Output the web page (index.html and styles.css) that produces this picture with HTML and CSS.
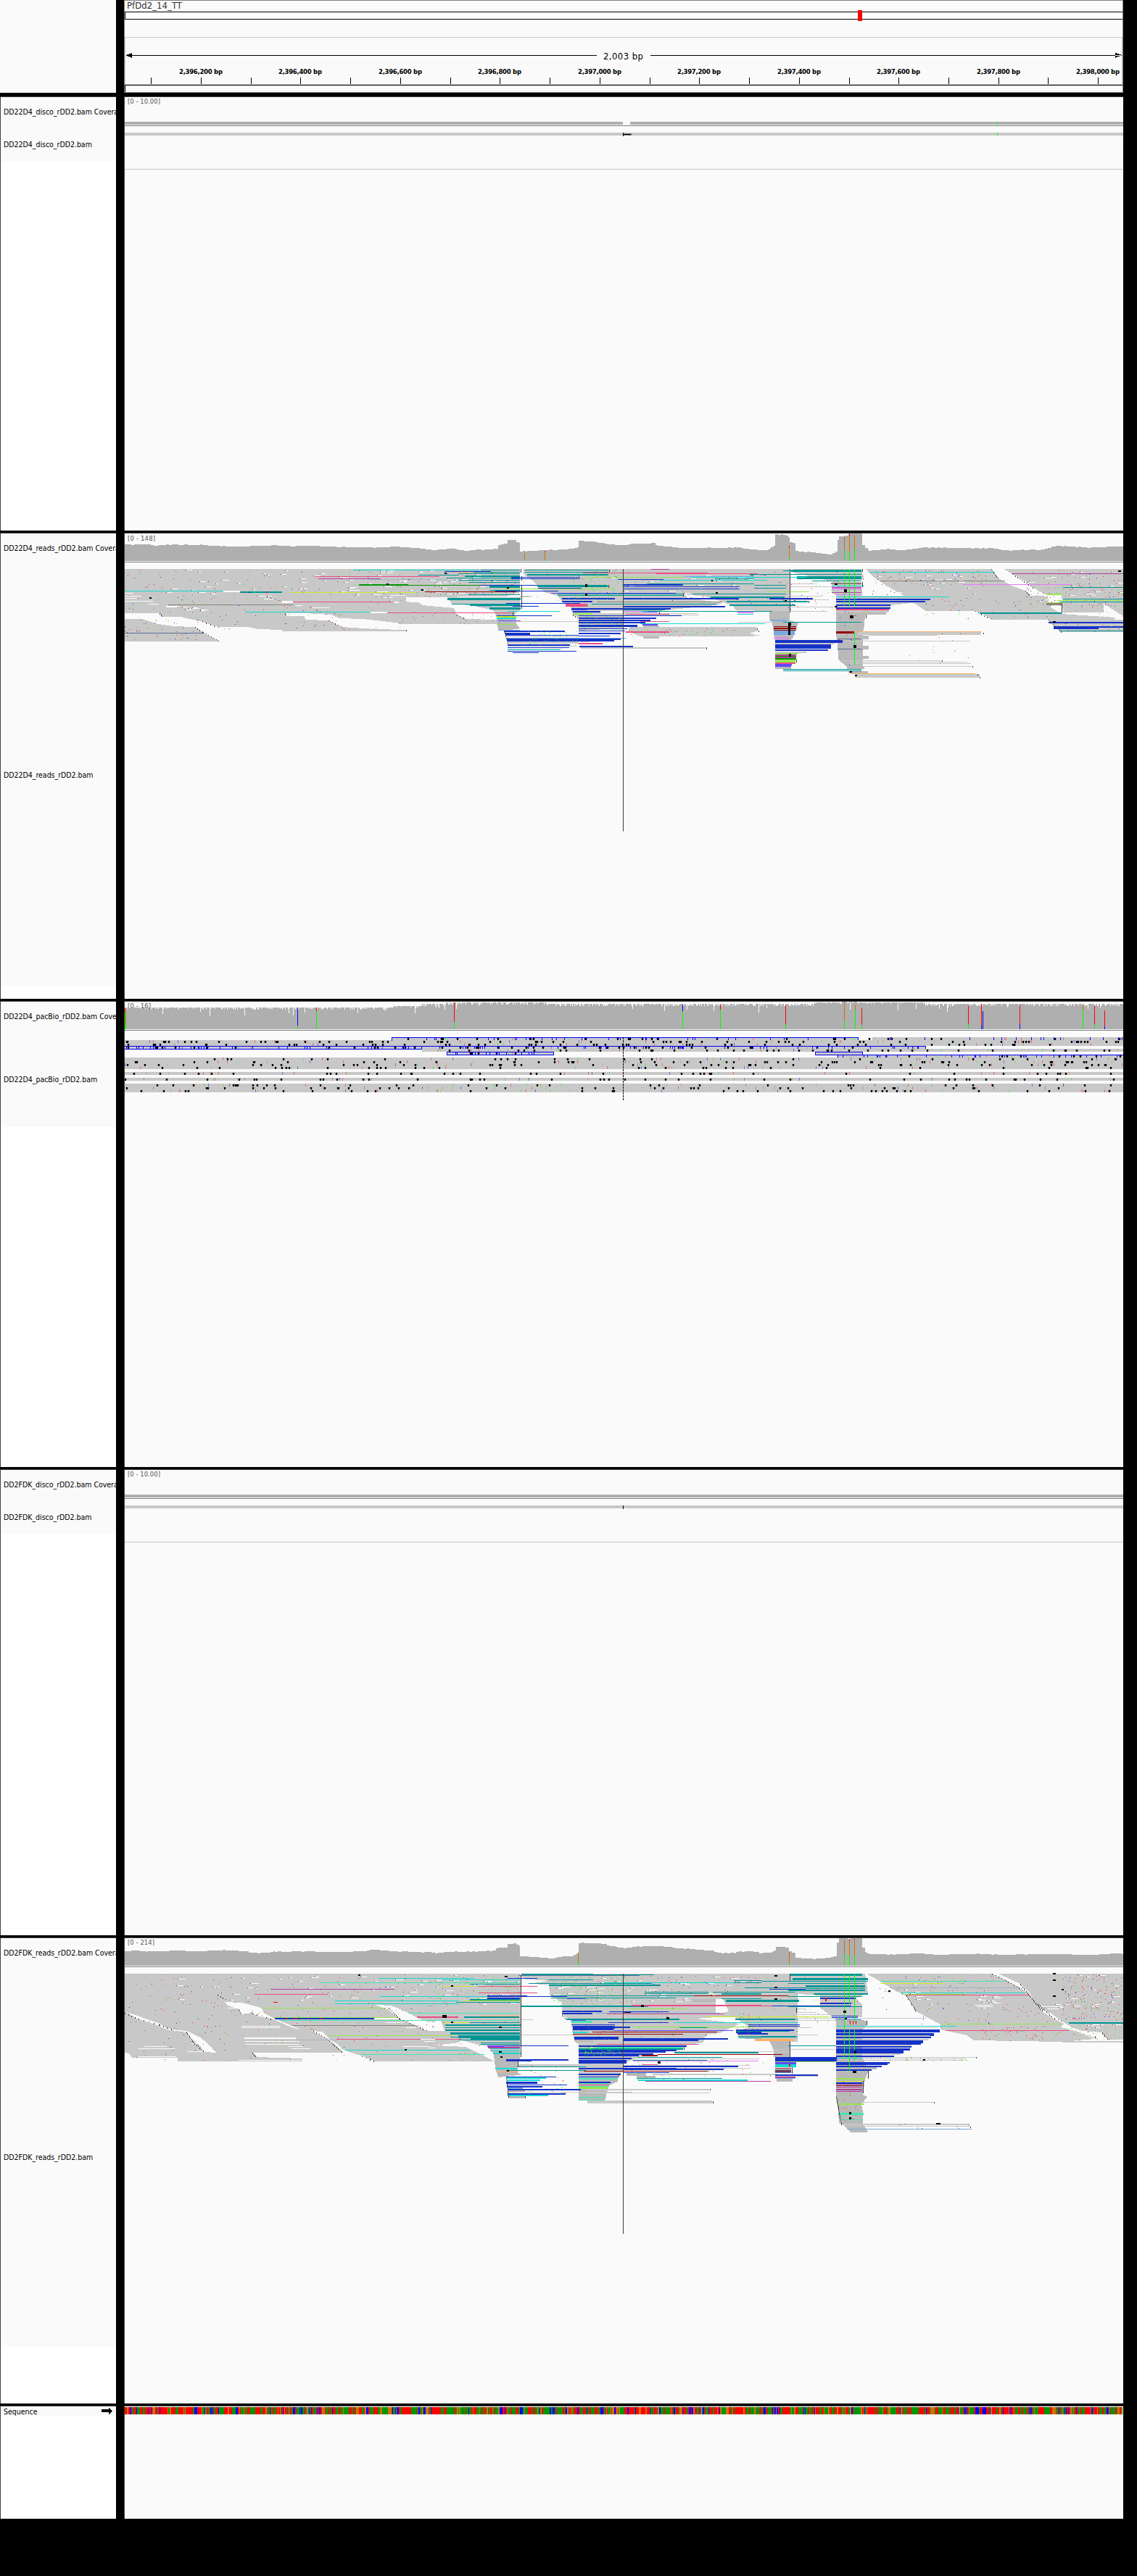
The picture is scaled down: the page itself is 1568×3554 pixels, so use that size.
FILE: index.html
```html
<!DOCTYPE html>
<html lang="en">
<head>
<meta charset="utf-8">
<title>PfDd2_14_TT</title>
<link rel="stylesheet" href="styles.css">
</head>
<body>
<main class="browser">
  <section class="row header">
    <div class="names plain"></div>
    <div class="data ruler">
      <svg width="1377" height="128" viewBox="172 0 1377 128" shape-rendering="crispEdges">
        <path fill="#808080" d="M172 0h1377v1h-1377zM1548 0h1v128h-1zM172 127h1377v1h-1377z"/>
        <path fill="#fff" d="M172 17h1376v9h-1376z"/>
        <path d="M172 16h1376v1h-1376zM172 26h1376v1h-1376zM172 16h1v11h-1zM172 117h1376v1h-1376zM172 117h1v10h-1z"/>
        <path fill="#f00" d="M1183 14h6v15h-6z"/>
        <path fill="#c8c8d0" d="M172 51h1376v1h-1376zM172 51h1v66h-1zM1547 51h1v66h-1zM172 116h1376v1h-1376z"/>
        <path d="M174 76h649v1h-649zM897 76h650v1h-650zM173 76l9-3v7zM1547 76l-9-3v7z"/>
        <g id="ticks"></g>
        <text class="chrom" x="175" y="12" textLength="76">PfDd2_14_TT</text>
        <text class="span" x="832" y="82" textLength="55">2,003 bp</text>
      </svg>
    </div>
  </section>
  <section class="row disco">
    <div class="names"><div class="track cover">DD22D4_disco_rDD2.bam Coverage</div><div class="track reads">DD22D4_disco_rDD2.bam</div></div>
    <div class="data"><svg id="p1" class="plot" height="598" viewBox="172 134 1377 598"></svg></div>
  </section>
  <section class="row tall">
    <div class="names"><div class="track cover">DD22D4_reads_rDD2.bam Coverage</div><div class="track reads long">DD22D4_reads_rDD2.bam</div></div>
    <div class="data"><svg id="p2" class="plot" height="642" viewBox="172 736 1377 642"></svg></div>
  </section>
  <section class="row tall">
    <div class="names"><div class="track cover">DD22D4_pacBio_rDD2.bam Coverage</div><div class="track reads mid">DD22D4_pacBio_rDD2.bam</div></div>
    <div class="data"><svg id="p3" class="plot" height="642" viewBox="172 1382 1377 642"></svg></div>
  </section>
  <section class="row tall">
    <div class="names"><div class="track cover">DD2FDK_disco_rDD2.bam Coverage</div><div class="track reads">DD2FDK_disco_rDD2.bam</div></div>
    <div class="data"><svg id="p4" class="plot" height="642" viewBox="172 2028 1377 642"></svg></div>
  </section>
  <section class="row tall">
    <div class="names"><div class="track cover">DD2FDK_reads_rDD2.bam Coverage</div><div class="track reads longer">DD2FDK_reads_rDD2.bam</div></div>
    <div class="data"><svg id="p5" class="plot" height="642" viewBox="172 2674 1377 642"></svg></div>
  </section>
  <section class="row seq">
    <div class="names"><div class="track sequence"><span>Sequence</span>
      <svg width="15" height="9" viewBox="0 0 15 9" shape-rendering="crispEdges"><path d="M0 2h10v-2h1v1h1v1h1v1h1v1h1v1h-1v1h-1v1h-1v1h-1v1h-1v-3h-10z"/></svg></div></div>
    <div class="data"><svg id="p6" class="plot" height="155" viewBox="172 3320 1377 155"></svg></div>
  </section>
</main>
<script src="tracks.js"></script>
</body>
</html>
```
FILE: styles.css
```css
body { margin: 0; background: #000; }
.browser { width: 1549px; font-family: "DejaVu Sans Condensed", "DejaVu Sans", sans-serif; font-stretch: condensed; color: #000; }
.row { display: flex; gap: 11px; box-sizing: border-box; }
.header { height: 128px; margin-bottom: 5px; }
.disco { height: 599px; }
.tall { height: 643px; margin-top: 3px; }
.seq { height: 156px; margin-top: 3px; }
.names { width: 160px; box-sizing: border-box; flex: none; overflow: hidden; background: #fff; border-left: 1px solid #404040; border-top: 1px solid #404040; }
.names.plain { background: #fafafa; border: 0; }
.data { width: 1378px; box-sizing: border-box; flex: none; overflow: hidden; background: #fafafa; border-left: 1px solid #404040; border-top: 1px solid #404040; }
.ruler { border-top: 0; border-left-color: #808080; }
.data svg { display: block; }
.plot { width: 1377px; }
.track { display: flex; align-items: center; box-sizing: border-box; padding-left: 4px; background: #fafafa; font-size: 10.5px; line-height: 14px; letter-spacing: -0.02px; white-space: nowrap; }
.cover { height: 40px; }
.reads { height: 49px; }
.long { height: 585px; }
.mid { height: 133px; }
.longer { height: 524px; }
.sequence { height: 13px; justify-content: space-between; padding-right: 5px; }
.sequence svg { margin-top: -1px; }
text { font-family: "DejaVu Sans Condensed", "DejaVu Sans", sans-serif; font-stretch: condensed; }
.chrom { font-size: 13px; fill: #333; }
.span { font-size: 13px; }
.tick { font-size: 9.5px; font-weight: bold; text-anchor: middle; }
.range { font-size: 9.4px; fill: #555; }
```
FILE: tracks.js
```js
const INK = { G:'#c8c8c8', g:'#b9b9b9', D:'#afafaf', T:'#009696', B:'#1432c8', C:'#14dcd2', P:'#ee4c83', M:'#b43ca0', L:'#96e650', Y:'#c8f028', R:'#960000', O:'#ffaf5f', S:'#5a6e96', K:'#3c3c3c', V:'#6446ff', A:'#78aae1', W:'#fafafa', N:'#8a8278', X:'#e678fa', E:'#46e6b4', F:'#009600', Z:'#000', r:'#ff0000', n:'#00ff00', b:'#0000ff', o:'#d17105', m:'#808080', i:'#a0b4c8' };
let seed = 7;
const rnd = () => (seed = (seed * 16807) % 2147483647) / 2147483647;
const add = (id, s) => document.getElementById(id).insertAdjacentHTML('beforeend', s);
const box = (id, c, x, y, w, h, a) => add(id, `<path fill="${INK[c]}" shape-rendering="crispEdges"${a ? ` opacity="${a}"` : ''} d="M${x} ${y}h${w}v${h}h${-w}z"/>`);

// Each tile has its own origin and horizontal density; three units per pixel vertically.
function tile(id, x0, y0, k) {
  const X = v => Math.round(x0 + v / k), Y = v => y0 + Math.round(v / 3);
  return {
    poly(c, pts) {
      add(id, `<polygon fill="${INK[c]}" shape-rendering="crispEdges" points="${pts.split(' ').map(p => p.split(',')).map(p => X(+p[0]) + ',' + Y(+p[1])).join(' ')}"/>`);
    },
    bars(s) {
      s.trim().split(/\s*;\s*/).filter(Boolean).forEach(e => {
        const [c, a, b, y, h] = e.split(' ');
        box(id, c, X(+a), Y(+y), Math.max(1, X(+b) - X(+a)), Math.max(1, Math.round((h || 3) / 3)));
      });
    },
    specks(n, a, b, y1, y2, colors, op) {
      const d = {};
      for (let i = 0; i < n; i++) {
        const c = colors[Math.floor(rnd() * colors.length)];
        d[c] = (d[c] || '') + `M${X(a + rnd() * (b - a))} ${Y(y1 + rnd() * (y2 - y1))}h1v1h-1z`;
      }
      for (const c in d) add(id, `<path fill="${INK[c]}" opacity="${op || .8}" shape-rendering="crispEdges" d="${d[c]}"/>`);
    },
    gaps(n, a, b, y1, y2) {
      let d = '', e = '';
      for (let i = 0; i < n; i++) {
        const x = X(a + rnd() * (b - a)), y = Y(y1 + rnd() * (y2 - y1)), w = 3 + Math.floor(rnd() * 9);
        d += `M${x} ${y}h${w}v1h${-w}z`; e += `M${x - 1} ${y}h1v1h-1z`;
      }
      add(id, `<path fill="#fafafa" shape-rendering="crispEdges" d="${d}"/><path fill="#3c3c3c" shape-rendering="crispEdges" d="${e}"/>`);
    },
    edge(pts) {
      const p = pts.split(' ').map(q => q.split(',').map(Number));
      let d = '';
      for (let i = 1; i < p.length; i++) {
        const [ax, ay] = p[i - 1], [bx, by] = p[i];
        for (let y = ay; y < by; y += 6) d += `M${X(ax + (bx - ax) * (y - ay) / (by - ay))} ${Y(y)}h1v${rnd() < .6 ? 2 : 1}h-1z`;
      }
      add(id, `<path fill="#3c3c3c" shape-rendering="crispEdges" d="${d}"/>`);
    },
    cover(base, pts) {
      const p = pts.split(' ').map(q => q.split(',').map(Number));
      let d = `M${X(p[0][0])} ${Y(base)}`;
      for (let i = 0; i < p.length; i++) {
        const [ax, ay] = p[i];
        d += `L${X(ax)} ${Y(ay)}`;
        if (p[i + 1]) {
          const [bx, by] = p[i + 1];
          for (let x = ax + 12; x < bx; x += 12) {
            const y = Y(ay + (by - ay) * (x - ax) / (bx - ax) + (rnd() - .5) * 3);
            d += `H${X(x)}V${y}`;
          }
          d += `H${X(bx)}`;
        }
      }
      add(id, `<path fill="${INK.D}" shape-rendering="crispEdges" d="${d}V${Y(base)}z"/>`);
    }
  };
}
const range = (id, y, t, w) => add(id, `<text class="range" x="176" y="${y}" textLength="${w}">${t}</text>`);

for (let i = 0; i < 20; i++) {
  const x = Math.round(208.3 + 68.73 * i);
  box('ticks', 'Z', x, 107, 1, 9);
  if (i % 2) add('ticks', `<text class="tick" x="${x}" y="102" textLength="60">${(2396100 + i * 100).toLocaleString('en-US')} bp</text>`);
}

[['p1', 134], ['p4', 2028]].forEach(([id, y]) => {
  box(id, 'D', 172, y + 34, 1377, 4); box(id, 'm', 172, y + 39, 1377, 1);
  box(id, 'G', 172, y + 49, 1377, 4); box(id, 'G', 172, y + 99, 1377, 1);
  range(id, y + 9, '[0 - 10.00]', 45);
});
box('p1', 'W', 859, 168, 10, 4); box('p1', 'm', 859, 184, 12, 3); box('p1', 'Z', 859, 185, 11, 1); box('p1', 'Z', 859, 183, 1, 5);
box('p1', 'n', 1375, 168, 1, 4); box('p1', 'n', 1375, 183, 1, 4); box('p4', 'Z', 859, 2077, 1, 5);

// DD22D4 short reads
let t = tile('p2', 0, 720, 2.8);
t.cover(162, '482,94 545,92 600,98 640,94 780,95 860,100 930,103 1000,98 1085,98 1130,101 1200,98 1250,103 1370,105 1470,106 1510,102 1568,106');
t.poly('G', '482,195 1568,195 1568,452 1090,452 1088,447 1000,445 955,436 845,434 765,408 718,400 700,393 628,393 616,378 482,378');
t.poly('G', '482,402 550,402 610,424 670,431 752,436 784,458 824,480 850,494 482,494');
t.poly('W', '1100,378 1175,378 1280,384 1310,400 1400,402 1500,414 1568,422 1568,447 1450,443 1320,434 1270,408 1180,405 1175,390 1106,390');
t.gaps(45, 640, 1568, 198, 300); t.gaps(14, 1330, 1550, 250, 330); t.gaps(8, 640, 800, 340, 365);
t.specks(150, 482, 1568, 198, 390, 'rnbonrn'); t.specks(50, 482, 780, 405, 492, 'rnbor'); t.specks(30, 850, 1568, 395, 445, 'rnbo');
t.bars('W 482 515 294;W 482 545 306;W 482 530 315;W 482 590 327;W 570 612 339;W 640 690 348 6;W 1140 1168 345;W 1205 1270 355;W 1090 1130 327 9;W 1000 1050 306;W 1020 1055 318;W 1505 1568 303;W 1520 1568 330 6;C 482 862 285;W 862 926 285 6;T 927 1090 288 6;Y 1122 1568 291;C 1364 1568 198;P 1215 1568 225;M 1229 1470 234;i 1420 1568 237;F 1385 1568 258 6;Z 1492 1500 256 6;P 1130 1520 330;N 650 1130 342;C 945 1430 372;W 1430 1495 373 5;P 1495 1568 375;S 482 784 459;Z 578 586 311 6;r 943 946 288 6;b 961 964 288 6;n 983 986 288 6;r 1028 1034 288 6');
t.edge('616,378 628,393'); t.edge('765,405 845,436'); t.edge('752,436 784,456 824,480 850,497'); t.edge('1100,378 1106,390'); t.edge('1270,408 1320,434'); t.edge('1030,306 1090,330');

t = tile('p2', 550, 720, 3);
t.cover(162, '0,106 75,108 150,117 225,110 270,120 330,115 405,112 410,97 445,90 450,74 475,76 500,87 501,124 530,121 600,116 690,114 715,110 744,103 744,78 800,82 870,92 925,97 960,91 1050,88 1070,98 1170,109 1400,106 1490,118 1530,118 1540,106 1557,95 1560,52');
t.poly('G', '0,195 501,195 501,290 440,308 35,312 0,290');
t.poly('G', '0,330 80,333 100,345 228,358 240,384 280,402 400,405 470,414 470,422 0,422');
t.poly('G', '200,312 501,312 501,365 470,388 400,388 400,375 385,362 290,345 220,338');
t.poly('g', '398,375 480,375 486,425 500,440 440,449 412,448 405,400');
t.poly('G', '516,195 1560,195 1560,365 1395,365 1380,345 1270,308 1180,300 1195,315 1340,335 1310,345 1100,365 940,385 928,398 928,440 744,450 744,395 720,385 712,350 680,335 658,305 600,290 575,265 550,240 516,215');
t.poly('G', '960,436 1480,436 1485,450 1450,462 1500,470 1430,474 1000,474 970,462 945,448');
t.gaps(30, 0, 400, 198, 300); t.gaps(20, 870, 1500, 220, 300); t.gaps(10, 1400, 1550, 198, 240);
t.bars(`C 0 330 198;T 340 501 198;B 190 380 204;O 222 320 207;T 310 501 207;T 245 501 213;T 80 250 219;T 272 501 222 6;P 0 168 225;
T 200 501 231;i 0 200 237;T 245 501 240;T 288 501 249;F 0 40 258 6;F 40 440 261;B 340 750 261;T 375 501 264 9;L 432 750 276;T 375 501 282;B 400 576 285;R 108 486 288;Y 0 70 291;T 288 501 300;W 30 200 312 18;
T 201 504 315 9;W 130 215 333 6;B 445 750 336;T 219 501 339;T 294 504 342 6;A 325 380 348;B 472 579 348;T 375 504 354 9;G 501 551 306;G 501 540 309;G 0 228 362;C 450 666 369;P 0 468 375;
B 405 633 387;Y 405 486 390 6;C 405 486 396 6;V 410 504 408;G 470 750 411;L 405 490 422;A 412 501 447;G 0 30 448 5;
T 522 867 198;T 522 867 207;T 531 867 216 6;B 465 750 228;B 465 750 234;P 762 1278 210;P 1065 1485 213;M 1045 1120 195;T 1452 1560 216 6;L 771 1177 228;A 1175 1560 225;C 1210 1560 228;T 1308 1560 234;B 905 1095 237;C 1080 1500 240;T 1025 1542 255;
T 573 864 261 9;B 928 1175 258 6;B 928 1410 267;B 576 756 273;B 928 1410 276;L 750 895 276;B 576 660 285;V 630 1146 294;T 657 1177 297;T 657 1177 303;T 1215 1560 297;T 1290 1560 309 6;B 675 895 315 6;B 928 1407 315 6;B 1533 1560 315 6;
B 675 800 327 6;N 818 1337 330;T 1356 1560 327 6;P 690 774 339 12;T 798 1315 339;T 1368 1560 342 6;B 928 1350 348 6;B 714 1125 357 6;T 928 1100 363;V 714 780 363;W 835 928 369 9;B 720 834 369 6;C 928 1200 369;X 928 1005 370;T 1029 1545 369;V 1008 1070 372;L 720 800 378 6;P 940 1119 381;G 940 1235 378;X 1401 1467 372 6;C 1401 1467 381;G 940 1242 384;
B 744 1170 387;B 744 1065 396 6;B 744 1040 405 6;P 1000 1119 411;B 744 1020 413 7;C 1000 1515 420;V 1008 1070 423 6;B 744 987 426 9;g 1011 1077 429 6;B 744 945 441 4;B 744 936 450;P 939 1119 453 6;B 744 918 459 6;B 744 873 471;G 1010 1435 471;g 1011 1077 474 8;
B 435 687 450 6;B 441 543 459 12;B 543 744 468;G 447 744 474;A 447 942 480;B 447 918 483 6;B 447 891 489 6;G 450 744 496 9;B 450 708 507 6;G 450 735 514;B 450 705 519;G 450 675 524;C 450 666 528;B 450 735 534;B 472 579 540;G 750 790 495;P 744 843 501 6;B 747 969 513 6;G 753 1269 519 6;G 1401 1542 414;A 1536 1560 405 6;g 1533 1560 370 35;R 1551 1560 432 6;R 1551 1560 441 6;A 1551 1560 450 20`);
t.specks(100, 516, 1560, 198, 340, 'nnnrnb'); t.specks(90, 0, 500, 200, 310, 'nnrrb'); t.specks(70, 720, 928, 198, 330, 'n'); t.specks(35, 744, 928, 380, 450, 'n'); t.specks(50, 500, 740, 450, 510, 'n'); t.specks(50, 0, 450, 370, 420, 'rnb', .5); t.specks(50, 960, 1400, 440, 472, 'nnr');
t.bars('K 504 508 195 15;K 506 509 225 18;K 506 509 260 100;K 471 474 372 15;K 870 873 198 10;K 868 871 260 12;K 777 780 340 12;K 1177 1180 297 12;K 1076 1079 372 9;K 1483 1486 440 6;K 1488 1491 450 6;K 1272 1275 519 9;K 30 33 447 6;o 519 522 128 26;n 519 522 155 7;r 603 606 120;o 603 606 123 34;n 603 606 156 6;Z 190 197 211 5;Z 92 102 280 5;Z 772 779 257 13;Z 772 779 296 9;Z 448 455 271 5;Z 1294 1300 241 6;Z 1312 1319 290 5');
t.edge('240,384 280,402'); t.edge('435,450 450,500'); t.edge('720,385 744,400');

t = tile('p2', 1040, 720, 2.9697);
t.cover(162, '0,115 45,120 65,108 85,98 87,52 120,53 140,62 145,85 165,90 168,120 240,127 315,136 320,128 338,124 341,75 346,60 380,57 385,48 441,48 443,95 470,121 530,113 600,117 690,106 820,107 920,110 990,110 1020,118 1180,115 1205,107 1235,98 1280,101 1370,107 1450,102 1512,101');
t.poly('G', '0,195 147,195 147,370 0,372');
t.poly('g', '62,370 147,370 147,408 180,418 168,450 160,478 150,490 85,490 75,420');
t.poly('G', '160,195 440,195 450,240 330,250 230,225 160,210');
t.poly('G', '318,250 440,250 442,305 800,305 725,318 700,330 640,335 560,345 550,375 336,380 336,303 318,295');
t.poly('g', '336,375 540,375 540,385 455,385 450,430 445,455 445,600 380,600 345,570 342,495 336,470');
t.poly('G', '455,195 970,195 1000,235 1055,265 1110,285 1125,300 1200,310 1215,355 1260,380 1480,395 1475,404 975,404 940,385 905,370 705,368 660,340 615,305 545,268 485,225');
t.poly('G', '1022,195 1512,195 1512,390 1430,340 1430,375 1265,375 1260,300 1190,300 1150,275 1110,245 1060,215');
t.poly('G', '1205,406 1512,406 1512,457 1260,457 1230,435 1210,415');
t.gaps(20, 480, 950, 215, 300); t.gaps(22, 1110, 1500, 200, 330);
t.bars(`T 150 440 198 9;T 118 150 201;T 0 440 216;P 0 15 213;T 175 440 225 12;C 0 210 228;C 0 52 240;T 238 440 243;T 0 70 255;T 0 130 261;G 0 248 256;N 315 440 252 6;C 318 450 264;T 0 130 273;G 147 330 267;L 50 226 288;T 0 130 297;G 130 278 306;T 0 125 309 6;G 147 305 321;B 62 241 315 6;T 0 220 327 6;T 0 168 342 6;G 0 320 351;T 0 75 369;G 147 300 369;
M 318 440 270;X 318 441 273 6;M 318 441 291;X 336 441 300;C 336 798 309;B 336 722 318 6;B 336 702 327 6;B 336 558 342 6;B 336 558 354 6;P 336 552 360 6;L 445 465 369;B 336 341 348;
A 65 135 405 6;T 118 440 414;C 0 45 420;R 80 172 432;R 80 172 438 6;R 80 172 447;A 80 166 450 18;X 80 143 477;X 80 143 483;B 86 362 489 12;B 86 315 507 18;B 86 303 528 6;G 86 330 501 6;G 86 213 538 5;L 86 178 543 6;M 86 172 549 18;F 86 172 555;F 86 172 563 5;L 86 169 570 12;P 86 169 582 6;V 86 153 588 6;V 86 150 594 6;g 86 150 600 9;T 118 441 609;T 118 441 615;
R 336 410 453 9;O 420 930 453;G 425 930 456 12;G 470 750 468;S 340 437 483;G 370 885 492;S 342 457 525;g 440 469 471 15;g 440 469 513 15;g 440 469 555 12;G 360 766 573;G 390 872 579;G 390 888 585;G 440 890 597;g 380 450 600 9;g 385 465 618 9;O 395 905 627;G 412 920 630 15;N 517 1028 243;C 472 985 207;X 855 1300 258;M 1055 1512 213;T 1265 1512 270;L 1197 1265 297 6;L 1197 1265 333;N 1197 1262 336 9;T 1265 1512 318;L 1241 1512 324;T 1250 1512 330;T 924 1259 375 6;B 1206 1512 414 6;B 1227 1411 432 12;B 1411 1512 432 6;T 1250 1512 450`);
t.specks(90, 480, 970, 200, 265, 'rnbor'); t.specks(60, 700, 1230, 310, 400, 'rnbon'); t.specks(110, 1110, 1510, 198, 360, 'rnbrn'); t.specks(60, 1270, 1510, 240, 400, 'r', .45); t.specks(60, 0, 440, 200, 370, 'rrnb'); t.specks(30, 345, 440, 375, 600, 'rnbn'); t.specks(14, 1230, 1500, 415, 455, 'rnb'); t.specks(14, 500, 900, 455, 600, 'rno');
t.bars('K 146 149 195 180;K 442 445 195 12;K 442 445 250 20;K 1260 1263 340 40;K 222 225 327 9;K 172 175 570 12;K 458 461 385 15;K 938 941 458 6;K 770 773 573 6;K 894 897 597 6;r 143 146 98 6;o 143 146 104 45;n 143 146 148 14;r 368 371 62;o 368 371 65 52;n 368 371 116 46;r 389 392 50 8;o 389 392 58 65;n 389 392 125 37;r 410 413 57;o 410 413 60 51;n 410 413 111 51;n 368 370 198 150;n 389 391 198 150;n 410 412 198 150;n 410 412 460 135;Z 331 341 256 7;Z 369 379 278 12;Z 329 340 349 6;Z 393 406 386 12;Z 141 150 416 11;Z 140 149 430 38;Z 408 418 511 13;Z 144 150 546 12;Z 393 401 619 7;Z 412 422 634 5;Z 1492 1502 202 5;Z 1225 1235 412 6;Z 126 133 325 7');
t.edge('970,195 1000,235'); t.edge('1110,285 1125,300'); t.edge('905,370 975,404'); t.edge('1060,215 1150,275'); t.edge('915,630 927,645'); t.edge('1205,406 1260,457');
range('p2', 746, '[0 - 148]', 38);
box('p2', 'm', 172, 775, 1377, 1); box('p2', 'K', 859, 785, 1, 362);

// DD22D4 PacBio reads
t = tile('p3', 0, 1360, 1.96);
t.bars('D 337 1060 90 90;D 1060 1140 84 96;D 1140 1205 75 105;D 1205 1480 69 111;D 1480 1568 75 105');
let u = tile('p3', 800, 1360, 2.0417);
u.bars('D 0 660 75 105;D 660 730 69 111;D 730 780 66 114;D 780 970 69 111;D 970 1529 75 105');
for (let x = 172; x < 1549; x += 1) if (rnd() < .4) {
  const top = x < 541 ? 1390 : x < 582 ? 1388 : x < 614 ? 1385 : x < 755 ? 1383 : x < 1123 ? 1385 : x < 1275 ? 1382 : 1385;
  box('p3', 'W', x, top, 1, rnd() < .06 ? 5 + Math.floor(rnd() * 8) : 1 + Math.floor(rnd() * 3));
}
t.bars('r 337 340 93 15;n 337 342 108 72;o 339 342 108 55;b 804 806 90 75;n 804 806 165 15;r 855 857 90 15;n 855 857 105 75;r 1227 1229 69 81;n 1227 1229 150 30;G 1060 1568 213 12;G 337 1568 225 36;G 1140 1568 261 12;G 1208 1495 273 12;G 337 1568 297 48;G 337 1568 357 12;G 337 1568 381 12;G 337 1568 405 36;b 1059 1568 213;b 1059 1061 213 15;b 337 1568 249;b 337 1140 261;b 1138 1140 249 15;b 1207 1496 273;b 1207 1496 285;b 1207 1209 273 15;b 1495 1497 273 15');
u.bars('b 288 290 78 27;n 288 290 105 75;r 394 396 78 21;n 394 396 99 81;r 578 580 78 80;n 578 580 158 22;o 743 745 69 75;n 743 745 144 36;o 774 776 78 21;n 774 776 99 81;r 792 794 93 68;n 792 794 165 15;r 1092 1094 84 75;n 1092 1094 159 21;r 1129 1131 75 90;b 1129 1131 165 15;b 1133 1135 105 75;r 1237 1239 78 81;b 1237 1239 159 21;o 1415 1417 78 21;n 1415 1417 99 81;r 1448 1450 84 75;n 1448 1450 159 21;r 1476 1478 102 66;b 1476 1478 168 12;G 0 782 213 12;G 822 1529 213 12;G 0 1529 225 24;G 0 972 249 12;G 0 1529 261 12;G 662 796 273 12;G 722 1529 285 12;G 0 1529 297 48;G 0 1529 357 12;G 0 1529 381 12;G 0 1529 405 36;b 0 782 213;b 781 783 213 12;b 0 972 249;b 971 973 249 12;b 661 796 273;b 661 796 285;b 661 663 273 15;b 795 797 273 15;b 722 1529 285');
[[213, 541, 1549, 30, 45], [225, 172, 1549, 75, 0], [237, 172, 1549, 60, 0], [249, 172, 1275, 45, 75], [261, 582, 1549, 40, 0], [273, 617, 762, 5, 12], [285, 1154, 1549, 9, 30], [297, 172, 1549, 27, 0], [309, 172, 1549, 50, 0], [321, 172, 1549, 50, 0], [333, 172, 1549, 32, 0], [357, 172, 1549, 40, 0], [381, 172, 1549, 42, 0], [405, 172, 1549, 33, 0], [417, 172, 1549, 38, 0], [429, 172, 1549, 34, 0]].forEach(([z, a, b, n, bl]) => {
  const y = 1360 + z / 3;
  let d = '', q = '';
  for (let i = 0; i < n; i++) { const x = Math.floor(a + rnd() * (b - a - 3)); d += `M${x} ${y + 1}h2v3h-2z`; q += `M${x - 1} ${y + 1}h4v2h-4z`; }
  for (let i = 0; i < 26 * (b - a) / 1377; i++) box('p3', 'rnbonr'[Math.floor(rnd() * 6)], Math.floor(a + rnd() * (b - a)), y, 1, 4, .45);
  add('p3', `<path fill="#777" opacity=".6" shape-rendering="crispEdges" d="${q}"/><path shape-rendering="crispEdges" d="${d}"/>`);
  for (let i = 0; i < bl; i++) box('p3', 'b', Math.floor(a + rnd() * (b - a)), y, 1, 4);
});
range('p3', 1391, '[0 - 16]', 32);
box('p3', 'm', 172, 1421, 1377, 1);
for (let y = 1431; y < 1516; y += 4) box('p3', 'Z', 859, y, 1, 3);

// DD2FDK short reads
t = tile('p5', 0, 2650, 2.6133);
t.cover(186, '449,126 480,124 530,127 600,125 645,122 700,126 790,122 860,125 915,133 950,132 990,128 1100,127 1200,130 1310,125 1345,121 1400,125 1470,128 1568,131');
t.poly('G', '449,219 1568,219 1568,582 1350,582 1310,562 1265,546 910,546 925,565 1090,570 1090,582 640,582 640,567 475,567 465,548 449,546');
t.poly('W', '450,376 510,400 575,425 605,446 640,454 675,456 720,484 745,505 780,545 735,542 720,515 690,490 672,462 600,450 560,430 500,408');
t.poly('W', '810,337 870,339 940,360 955,385 1000,410 1085,450 1050,440 980,405 930,395 910,380 870,388 860,365 820,352');
t.poly('W', '1120,455 1160,460 1185,485 1215,510 1240,535 1265,546 1235,546 1215,520 1175,485 1140,465');
t.poly('W', '1350,348 1410,352 1470,380 1500,400 1530,415 1568,420 1568,455 1540,455 1500,435 1440,405 1400,370');
t.gaps(40, 600, 1568, 222, 330); t.specks(230, 449, 1568, 222, 450, 'rnbonrnr'); t.specks(90, 449, 1568, 450, 578, 'rnborn');
t.bars('C 1368 1568 237;E 1150 1568 255;M 972 1422 282;P 918 1180 303;C 1368 1568 312;C 1207 1568 330;C 1207 1568 342;L 945 1393 360;E 1470 1568 381;P 1503 1568 396 6;L 988 1436 399;B 990 1348 402 6;W 1348 1440 402 6;E 1008 1568 411;N 1050 1500 432;L 1185 1568 474;i 1070 1215 492;P 1213 1568 489;C 1243 1568 534;E 1300 1568 552;W 870 1010 435;W 870 1010 441;W 820 900 360;W 880 1065 483 6;W 882 1078 498;W 882 1078 510;W 1040 1095 519;W 1050 1118 527;W 520 602 518;W 500 630 527;W 690 748 507;W 725 762 522;W 675 780 540;W 860 1090 576;W 449 473 562;W 500 635 561;W 925 1085 561;W 1390 1455 420;W 1463 1500 441;W 1515 1568 489;W 1530 1568 498;W 1450 1550 519;W 1545 1568 525;r 985 1000 336;r 1062 1070 402 6;r 1156 1159 402 6;r 1110 1113 402 6;r 1030 1034 402 6;r 1086 1089 402 6;Z 1292 1300 223 5;Z 1458 1466 530 5');
t.edge('450,380 500,405 575,430 620,450'); t.edge('672,460 695,500 735,540'); t.edge('860,365 870,388'); t.edge('910,380 985,408'); t.edge('1400,360 1440,405 1500,435 1540,455'); t.edge('1130,457 1175,485 1235,543'); t.edge('1305,560 1350,580'); t.edge('910,546 925,563'); t.edge('785,305 815,325');

t = tile('p5', 600, 2650, 3);
t.cover(186, '0,134 45,128 140,128 240,124 260,112 293,111 300,96 325,94 350,105 351,147 420,151 470,156 525,148 560,147 593,130 594,92 650,93 700,97 755,110 780,113 835,106 920,104 1030,116 1130,122 1185,134 1240,134 1246,128 1330,128 1345,134 1400,128 1410,108 1460,112 1465,126 1490,140 1492,153 1500,153');
t.poly('G', '0,219 355,219 355,515 190,515 110,495 45,470 25,415 0,415');
t.poly('G', '0,455 45,455 110,490 100,505 0,515'); t.poly('G', '0,515 125,523 165,540 245,582 0,582');
t.poly('g', '220,520 352,520 352,570 340,600 345,640 262,648 250,610 245,575 240,550');
t.poly('G', '358,219 1500,219 1500,500 1260,485 1245,455 1300,440 1240,400 1110,395 1215,375 1190,325 1160,325 1160,400 1080,405 1260,425 1180,465 1120,470 1110,505 1030,515 850,560 780,590 780,620 760,640 755,665 708,670 594,670 594,510 578,500 570,470 560,410 527,390 525,340 475,305 470,265 380,262 470,250 358,240');
t.poly('g', '594,655 755,655 755,667 720,680 708,720 705,742 594,742'); t.poly('g', '576,485 655,485 655,501 576,501');
t.poly('g', '1383,497 1465,497 1465,565 1400,565 1400,535');
t.gaps(25, 0, 350, 225, 350); t.gaps(45, 650, 1450, 222, 345); t.gaps(8, 470, 640, 255, 310);
t.bars(`C 0 160 237;B 300 423 237;E 0 360 255;C 30 351 243;T 358 655 219 6;T 655 905 222;S 345 845 225;T 467 655 243;T 144 351 261;Y 36 162 270;P 180 423 270;P 180 423 297;C 0 351 312;B 216 380 309 6;B 216 546 312;T 144 351 324 6;B 216 351 318 6;B 480 546 312;T 480 997 309;T 480 997 318;V 546 625 321;Y 117 358 330;C 0 100 330;T 87 351 336;C 0 100 342;T 358 882 351 6;E 0 351 381;P 0 96 396 6;T 120 348 396 6;O 190 348 393;G 351 405 408;E 0 351 411;Y 36 162 420;T 144 351 420;
T 42 353 429 6;T 42 351 441;T 42 351 450 6;T 63 351 462 9;L 0 78 474;G 351 600 471;T 63 351 480;T 96 351 474 12;T 147 351 486 9;P 0 108 489;T 102 351 492;T 189 351 504;T 189 351 510;V 216 285 516 6;B 285 552 516;M 219 351 522 6;C 228 351 528 3;G 228 351 531;C 228 351 537;C 0 144 534;C 240 354 546 6;E 0 207 552;
B 294 552 573 6;B 294 400 579;G 339 740 594 9;T 339 625 603;C 250 339 609 6;T 294 625 618;O 258 345 624;g 260 355 633 6;B 294 501 645;C 294 459 648 6;C 297 435 657 6;B 294 423 666 9;B 297 546 678;B 300 444 684 6;A 300 363 690 6;B 300 603 696 6;G 620 1135 696 6;g 300 372 702 9;G 330 815 708;G 620 1137 711;B 300 540 714 6;C 300 467 720 6;g 303 372 726 9;
T 388 897 258;T 470 933 264 6;C 700 1236 255;T 1236 1500 246;T 1236 1500 255;T 1280 1500 276;B 1383 1500 282;T 867 1128 294;T 867 1128 300;T 1150 1500 294;T 1185 1500 300 6;R 1032 1455 309;T 780 1070 309;T 1185 1500 321;T 1202 1500 327 9;g 1065 1160 324 12;P 813 1383 348 6;B 1395 1500 350 4;T 1460 1500 354;L 800 1040 363;B 525 690 372 6;B 525 650 381 6;B 720 966 375;Z 780 810 377 5;A 665 1180 381;P 710 1193 384;T 543 1010 405 6;V 563 624 411;E 563 650 414 9;B 717 966 420;C 987 1500 420;B 564 744 429;B 1296 1500 429;B 570 745 435 12;B 745 806 438 6;L 815 1320 438;T 1010 1125 441;B 1296 1500 435;B 570 738 447 6;V 738 1233 453;T 1245 1500 456;B 1245 1485 450 6;B 1245 1400 459 6;B 1250 1377 465 6;C 570 633 459 6;R 651 1167 459;R 570 1026 468;Y 1118 1500 396;T 1242 1500 405 6;
B 576 759 480 12;B 780 1212 486 6;B 780 1089 492 6;T 1254 1500 477;T 1254 1500 483;O 1322 1482 490 8;P 670 1092 510;B 594 1040 516 6;E 670 1026 522 6;T 594 1026 528 6;B 594 999 534 6;B 594 953 540 6;B 594 903 549 6;B 594 843 555 6;R 855 921 555 6;R 921 1437 552;T 990 1338 543 6;G 1000 1410 540;B 594 813 567 6;T 837 1188 564;B 594 792 576 15;T 820 1125 575;G 820 1340 570;X 820 1338 579;P 858 921 594;G 780 1305 598;B 780 1254 600 6;B 780 1193 609 9;B 594 778 609 6;G 1000 1305 610;R 615 1130 621;B 780 969 627;g 792 873 630 12;G 900 1420 633 6;B 594 768 633 6;B 594 759 645;E 594 753 651 6;T 834 1188 651;C 840 1293 657 6;M 870 1388 663;g 835 912 642 9;
B 594 726 666 6;E 594 720 672;P 594 720 678;E 594 720 683;L 594 714 687 8;E 594 702 729;E 594 702 740;g 594 702 718 9;G 630 1145 744 12;
B 1407 1500 564 18;L 1407 1500 583;V 1407 1494 585 9;C 1407 1494 594 12;R 1407 1473 609;S 1407 1473 615 6;R 1407 1473 621;T 1407 1473 624 6;B 1407 1500 636 6;M 1407 1491 645 6;A 1407 1491 651;g 1413 1478 655 13`);
t.specks(90, 0, 350, 225, 345, 'nnr'); t.specks(150, 480, 800, 222, 350, 'nnnnr'); t.specks(80, 850, 1500, 225, 300, 'rrnnb'); t.specks(90, 600, 780, 520, 560, 'n'); t.specks(60, 1250, 1450, 370, 470, 'nrr'); t.specks(60, 780, 1500, 570, 665, 'nnr'); t.specks(60, 600, 1000, 360, 490, 'nr'); t.specks(30, 350, 540, 573, 720, 'rn'); t.specks(40, 0, 350, 400, 580, 'rn');
t.bars('K 355 358 225 340;K 341 344 575 30;K 372 375 726 9;K 760 763 636 9;K 1137 1140 696 6;K 1148 1151 747 8;K 1477 1480 606 27;K 1028 1031 522 12;K 1465 1468 500 65;K 1118 1121 470 6;o 591 594 132 36;n 591 594 168 18;r 1464 1467 132 6;o 1464 1467 138 36;n 1464 1467 174 12;Z 31 47 391 11;Z 288 299 229 6;Z 853 865 348 8;Z 958 968 400 10;Z 264 275 439 7;Z 1404 1415 225 6;Z 1404 1415 274 5;Z 1404 1415 322 8;Z 922 932 583 8;Z 264 275 541 7;Z 297 305 619 5;Z 67 75 267 5;Z 66 75 418 7;Z 270 278 562 5');
t.edge('525,390 545,408'); t.edge('294,645 303,735');

t = tile('p5', 1050, 2650, 3);
t.cover(186, '0,134 35,131 55,122 62,107 110,112 115,126 140,136 142,153 165,157 240,156 310,147 312,90 322,73 405,73 416,85 418,112 435,136 520,140 650,136 740,141 800,138 880,137 980,140 1100,138 1250,139 1350,142 1430,137 1497,136');
t.poly('G', '0,219 147,219 147,490 0,490'); t.poly('g', '33,497 118,497 118,565 52,565 50,530');
t.poly('G', '110,219 430,219 440,300 390,320 418,345 418,400 290,395 243,360 243,310 110,300');
t.poly('g', '309,400 437,414 437,432 418,450 418,565 445,620 430,655 420,720 437,728 415,760 420,790 420,840 440,875 370,875 340,845 320,838 315,755 309,725');
t.poly('G', '435,219 955,219 1010,245 1075,280 1110,305 1145,345 1160,375 1210,405 1250,425 1240,440 1300,455 1380,490 1240,500 880,495 850,475 740,450 740,430 640,375 620,345 600,310 555,290 490,250');
t.poly('G', '980,219 1497,219 1497,492 1435,492 1410,462 1330,455 1290,445 1245,418 1200,385 1165,370 1140,345 1110,300 1070,260');
t.gaps(14, 490, 700, 250, 370); t.gaps(14, 860, 960, 310, 360); t.gaps(18, 1200, 1490, 225, 360); t.gaps(8, 1330, 1490, 415, 460);
t.bars(`T 118 418 219 9;T 130 440 237 9;T 0 440 249;T 110 425 258;T 183 430 267 9;T 183 430 279;T 0 183 276;B 33 183 282;T 110 430 285 6;T 0 141 294;T 215 440 300 6;R 0 110 309;T 110 418 312;T 0 156 327 9;B 243 390 318 6;B 0 372 350 4;B 243 372 339 6;P 0 45 351;T 110 418 354;G 150 180 363;G 145 228 379;G 0 290 387;Y 0 279 396;G 145 320 402;T 0 141 405 6;G 145 310 411;C 0 153 420;B 0 159 429;B 0 159 435;G 145 210 441;B 0 135 450 6;T 0 118 456;B 0 27 465 6;G 145 234 471;T 0 144 477 6;O 0 132 490 8;B 291 399 393;B 291 399 399;A 305 414 405 6;G 418 680 402;C 309 807 435;G 309 735 441;
T 110 418 516;G 45 306 532;G 0 118 540;R 0 87 552;
B 309 738 450 12;B 309 714 465 12;B 309 702 480 6;g 309 695 474 6;G 418 690 489 6;B 309 669 495 12;B 309 660 507 6;G 309 625 513 6;B 309 621 519 6;B 309 615 528 9;B 309 588 537 12;G 418 575 550 6;B 309 549 558 6;G 418 885 564;C 309 418 567;G 418 842 571;G 418 838 577;B 309 531 585 6;B 309 522 591 6;B 309 498 600 6;g 309 477 606 9;B 309 456 615 6;
L 309 428 651 6;Y 309 418 663;B 309 418 669 6;M 309 418 675;R 309 418 681;M 309 418 687;M 309 418 696 6;M 309 418 705;G 418 710 750;L 315 425 756 6;E 318 423 795 9;E 321 418 822;G 340 855 840 6;G 355 860 849;A 355 870 861;
B 57 313 564 18;L 57 303 582;V 57 144 586 8;C 57 144 594 12;R 57 123 609;S 57 123 615 6;R 57 123 621;S 57 123 624 6;B 57 234 636 6;G 57 234 642;M 57 141 645 6;A 57 138 651;g 63 129 655 13;M 0 39 663;
E 493 1005 249;Y 493 757 258 4;i 545 1062 276;C 575 1090 297;L 582 845 303;P 594 1110 306;L 740 1240 426;P 762 1272 453;T 1272 1497 420 6;G 1245 1497 497 6;G 1245 1317 463;G 1245 1340 469;G 1245 1365 475;G 1245 1380 481;W 885 955 348;W 895 957 355;W 1150 1245 353;W 1175 1230 362`);
t.specks(70, 490, 960, 225, 320, 'rnbon'); t.specks(50, 640, 1200, 340, 440, 'rnbr'); t.specks(60, 880, 1240, 435, 495, 'rrnor'); t.specks(160, 1240, 1495, 222, 410, 'rrnbr'); t.specks(40, 1250, 1495, 425, 495, 'rno'); t.specks(60, 0, 430, 230, 420, 'rnn'); t.specks(30, 330, 400, 600, 830, 'rnon'); t.specks(25, 440, 860, 564, 580, 'rn'); t.specks(8, 440, 850, 840, 864, 'rnbo');
t.bars('K 118 121 219 30;K 118 121 497 68;K 145 148 360 20;K 436 439 414 18;K 442 445 620 34;K 420 423 663 50;K 888 891 563 6;K 714 717 750 6;K 126 129 609 24;r 114 117 132 6;o 114 117 138 36;n 114 117 174 12;o 342 345 78 60;n 342 345 138 48;r 363 366 78 6;o 363 366 84 60;n 363 366 144 42;r 384 387 75;o 384 387 78 64;n 384 387 142 44;n 342 344 219 250;n 363 365 225 120;n 384 386 219 200;n 342 344 470 95;n 363 365 450 170;n 384 386 450 130;r 264 270 318 14;r 366 369 414 15;r 378 381 414 15;r 390 393 414 15;Z 54 65 225 6;Z 54 65 274 5;Z 54 65 322 7;Z 339 350 372 9;Z 345 353 403 7;Z 384 392 536 12;Z 379 393 622 8;Z 363 371 793 10;Z 363 371 814 8;Z 1206 1217 217 5;Z 1206 1217 244 5;Z 1242 1250 283 6;Z 1206 1217 310 5;Z 724 742 838 5;Z 670 677 573 7;Z 526 533 289 7;r 114 119 594 9');
t.edge('955,219 1010,245 1075,280'); t.edge('1070,260 1140,345 1165,375'); t.edge('1145,345 1200,395 1250,418'); t.edge('600,310 640,375'); t.edge('1380,480 1385,490'); t.edge('1410,462 1435,492'); t.edge('855,840 865,855'); t.edge('309,725 330,840');
range('p5', 2683, '[0 - 214]', 37);
box('p5', 'm', 172, 2713, 1377, 1); box('p5', 'K', 859, 2723, 1, 359);

// Reference bases, one column each
const base = { r: '', F: '', b: '', o: '' };
for (let x = 172; x < 1548;) {
  const q = rnd(), c = q < .39 ? 'r' : q < .76 ? 'F' : q < .88 ? 'b' : 'o', w = rnd() < .12 ? 4 : rnd() < .4 ? 2 : 1;
  base[c] += `M${x} 3321h${Math.min(w, 1548 - x)}v10h${-Math.min(w, 1548 - x)}z`; x += w;
}
add('p6', '<path fill="#fff" d="M172 3320h1377v1h-1377z"/>' + Object.keys(base).map(c => `<path fill="${INK[c]}" shape-rendering="crispEdges" d="${base[c]}"/>`).join(''));
```
